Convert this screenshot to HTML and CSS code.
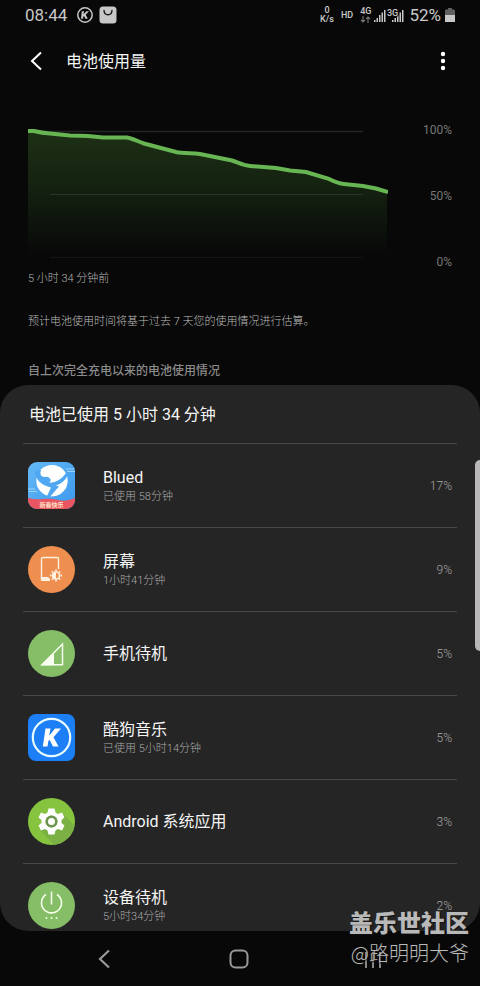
FILE: index.html
```html
<!DOCTYPE html>
<html lang="zh-CN">
<head>
<meta charset="utf-8">
<meta name="viewport" content="width=device-width, initial-scale=1">
<title>电池使用量</title>
<link rel="stylesheet" href="styles.css">
</head>
<body>
<div class="screen">
  <div class="status">
    <div class="status-group">
      <span class="clock">08:44</span>
      <svg width="18" height="18" viewBox="0 0 18 18" aria-hidden="true"><circle cx="9" cy="9" r="7.2" fill="none" stroke="#c8c8c8" stroke-width="1.5"/><path d="M5.8 5.2H8L7.6 8.2L10.4 5.2H13L9.7 8.7L11.8 12.8H9.4L8 10L7.1 11V12.8H5Z" fill="#c8c8c8"/></svg>
      <svg width="18" height="18" viewBox="0 0 18 18" aria-hidden="true"><rect x="0.5" y="0.5" width="17" height="17" rx="3.5" fill="#c8c8c8"/><path d="M5 4.5C5.5 10.2 12.5 10.2 13 4.5" fill="none" stroke="#181818" stroke-width="1.4" stroke-linecap="round"/></svg>
    </div>
    <div class="status-group status-right">
      <span class="speed"><span>0</span><span>K/s</span></span>
      <span class="hd">HD</span>
      <span class="network"><span>4G</span><svg width="11" height="7" viewBox="0 0 11 7" aria-hidden="true"><path d="M3 0V6M1 4L3 6L5 4M8 7V1M6 3L8 1L10 3" fill="none" stroke="#777" stroke-width="1.1"/></svg></span>
      <svg class="signals" width="32" height="15" viewBox="0 0 32 15" aria-hidden="true"><g fill="#c8c8c8"><path d="M1 12H2.5V14H1ZM3.5 10H5V14H3.5ZM6 7H7.5V14H6ZM8.5 4.500H10V14H8.5ZM11 2H12.5V14H11ZM19 12H20.5V14H19ZM21.5 10H23V14H21.5ZM24 7H25.5V14H24ZM26.5 4.500H28V14H26.5ZM29 2H30.5V14H29Z"/></g><text class="signal-label" x="14" y="8">3G</text></svg>
      <span class="level">52%</span>
      <svg width="10" height="14" viewBox="0 0 10 14" aria-hidden="true"><path d="M3 0H7V1.5H9Q10 1.5 10 2.5V8H0V2.5Q0 1.5 1 1.5H3Z" fill="#606060"/><path d="M0 7H10V14H0Z" fill="#c8c8c8"/></svg>
    </div>
  </div>

  <header class="header">
    <button class="icon-button" type="button" aria-label="返回"><svg width="14" height="20" viewBox="0 0 14 20"><path d="M12 1.5L3 10L12 18.5" fill="none" stroke="#fff" stroke-width="2"/></svg></button>
    <h1>电池使用量</h1>
    <button class="icon-button more" type="button" aria-label="更多选项"><svg width="6" height="20" viewBox="0 0 6 20"><g fill="#fff"><circle cx="3" cy="3" r="2.2"/><circle cx="3" cy="10" r="2.2"/><circle cx="3" cy="17" r="2.2"/></g></svg></button>
  </header>

  <section class="summary">
    <div class="chart">
      <svg class="plot" viewBox="0 2 360 138" role="img" aria-label="电池电量">
        <defs><linearGradient id="fill" x1="0" y1="0" x2="0" y2="1"><stop offset="0" stop-color="#1d3014"/><stop offset="0.5" stop-color="#132010"/><stop offset="1" stop-color="#080808"/></linearGradient></defs>
        <path d="M0 11.5H335" stroke="#242424" stroke-width="1.5"/>
        <path d="M0 11L7 11L14 12.5L40 15L58 16L75 17L99 17.5L116 23L148 32L172 34L202 40L222 46L248 48.5L278 52L300 59L312 63L335 66L348 69L359 72V134H0Z" fill="url(#fill)"/>
        <path d="M22 74.5H335" stroke="#3b463b" stroke-opacity="0.55"/>
        <path d="M22 137.5H335" stroke="#151515"/>
        <path d="M0 11L6 11C10 12 14 13 22 13.5L42 15.5L60 16L75 17.5H99C105 18.5 110 21.5 116 23.5L148 32C156 33.5 164 33 172 34L204 40.5C210 42.5 215 45.5 222 46L248 48L262 50.5L278 52L300 58.5C306 61.5 310 63.5 316 64L335 66L348 68.5L360 72" fill="none" stroke="#67b653" stroke-width="4"/>
      </svg>
      <div class="axis"><span>100%</span><span>50%</span><span>0%</span></div>
    </div>
    <p class="start">5 小时 34 分钟前</p>
    <p class="note">预计电池使用时间将基于过去 7 天您的使用情况进行估算。</p>
    <h2 class="section-title">自上次完全充电以来的电池使用情况</h2>
  </section>

  <main class="card">
    <h2 class="card-title">电池已使用 5 小时 34 分钟</h2>
    <ul class="apps">
      <li class="app">
        <svg class="app-icon" viewBox="0 0 47 47" aria-hidden="true">
          <defs><linearGradient id="sky" x1="0" y1="0" x2="1" y2="1"><stop offset="0" stop-color="#64b8f5"/><stop offset="1" stop-color="#3c98ed"/></linearGradient><clipPath id="tile"><rect width="47" height="47" rx="9"/></clipPath></defs>
          <g clip-path="url(#tile)"><rect width="47" height="47" fill="url(#sky)"/>
          <path d="M38 7H46M39 9.5H47M0 27H7M1 29.5H9" stroke="#9bd3fa" stroke-width="1"/>
          <circle cx="24" cy="18.7" r="15.7" fill="#fff"/>
          <path d="M7 9L13 8Q11 14 16 15Q20 14 22.500 17Q23 19 21.500 21Q32 20 38 11L40 13Q36 21 28 23.500L31 24.500L21 36L19 34L23 25.500Q12 23 8 15Z" fill="#4fa8f1"/>
          <path d="M0 36Q8 38 15 37T30 38T47 36V47H0Z" fill="#e95662"/></g>
          <text class="banner-text" x="23.5" y="45" text-anchor="middle">新春快乐</text>
        </svg>
        <div class="app-text"><h3>Blued</h3><p>已使用 58分钟</p></div><span class="percent">17%</span>
      </li>
      <li class="app">
        <svg class="app-icon" viewBox="0 0 47 47" aria-hidden="true"><circle cx="23.5" cy="23.5" r="23.5" fill="#ee8f50"/><path d="M30.5 23V13Q30.5 11.5 29 11.5H15Q13.5 11.5 13.5 13V32.5" fill="none" stroke="#fff1df" stroke-width="1.4"/><path d="M12.8 31H20L22 33V35H14Q12.8 35 12.8 34Z" fill="#fff1df"/><circle cx="28" cy="29.5" r="3.5" fill="none" stroke="#fff1df" stroke-width="1.5"/><path d="M28 26A3.5 3.5 0 0 0 28 33Z" fill="#fff1df"/><path d="M28 23.5V25M28 34V35.5M22 29.5H23.5M32.5 29.5H34M23.8 25.3L24.9 26.4M31.1 32.6L32.2 33.7M23.8 33.7L24.9 32.6M31.1 26.4L32.2 25.3" stroke="#fff1df" stroke-width="1.8"/></svg>
        <div class="app-text"><h3>屏幕</h3><p>1小时41分钟</p></div><span class="percent">9%</span>
      </li>
      <li class="app">
        <svg class="app-icon" viewBox="0 0 47 47" aria-hidden="true"><circle cx="23.5" cy="23.5" r="23.5" fill="#86bd67"/><path d="M14 34.8L34.5 14V34.8Z" fill="none" stroke="#f7ffee" stroke-width="1.5"/><path d="M13 35.3L26 22.5V35.3Z" fill="#f7ffee"/></svg>
        <div class="app-text"><h3>手机待机</h3></div><span class="percent">5%</span>
      </li>
      <li class="app">
        <svg class="app-icon" viewBox="0 0 47 47" aria-hidden="true"><rect width="47" height="47" rx="8" fill="#1c7ff5"/><circle cx="23.5" cy="23.5" r="18.7" fill="none" stroke="#e8fbff" stroke-width="2.2"/><path d="M17.5 14.5H22.5L21.2 21.8L27 14.5H33L25.5 23.2L30.5 32.5H25L21.5 25.8L20.3 27.2L19.5 32.5H14.8Z" fill="#fff"/></svg>
        <div class="app-text"><h3>酷狗音乐</h3><p>已使用 5小时14分钟</p></div><span class="percent">5%</span>
      </li>
      <li class="app">
        <svg class="app-icon" viewBox="0 0 47 47" aria-hidden="true"><defs><clipPath id="disc"><circle cx="23.5" cy="23.5" r="23.5"/></clipPath></defs><g clip-path="url(#disc)"><rect width="47" height="47" fill="#86c440"/><path d="M12 32L27 48H47V28L35 16Z" fill="#7bb045"/></g><path fill-rule="evenodd" d="M20.5 10.5H26.5L27.5 14.5L30 16L34 14.5L36.5 19.5L33.5 22V25L36.5 27.5L34 32.5L30 31L27.5 32.5L26.5 36.5H20.5L19.5 32.5L17 31L13 32.5L10.5 27.5L13.5 25V22L10.5 19.5L13 14.5L17 16L19.5 14.5ZM29.5 23.5A6 6 0 1 0 17.5 23.5A6 6 0 1 0 29.5 23.5Z" fill="#fff"/><circle cx="23.5" cy="23.5" r="6" fill="#6d9550"/><circle cx="23.5" cy="23.5" r="3.5" fill="#fff"/></svg>
        <div class="app-text"><h3>Android 系统应用</h3></div><span class="percent">3%</span>
      </li>
      <li class="app">
        <svg class="app-icon" viewBox="0 0 47 47" aria-hidden="true"><circle cx="23.5" cy="23.5" r="23.5" fill="#86bd67"/><path d="M18 12.5A10 10 0 1 0 29 12.5M23.5 9.5V22.5" fill="none" stroke="#f4ffe9" stroke-width="1.6"/><g fill="#f4ffe9"><circle cx="18.5" cy="36" r="1"/><circle cx="23.5" cy="36" r="1"/><circle cx="28.5" cy="36" r="1"/></g></svg>
        <div class="app-text"><h3>设备待机</h3><p>5小时34分钟</p></div><span class="percent">2%</span>
      </li>
    </ul>
  </main>

  <nav class="nav" aria-label="系统导航">
    <button class="nav-button" type="button" aria-label="返回"><svg width="22" height="22" viewBox="0 0 22 22"><path d="M16 2.5L7 11L16 19.5" fill="none" stroke="#999" stroke-width="2.2"/></svg></button>
    <button class="nav-button" type="button" aria-label="主屏幕"><svg width="22" height="22" viewBox="0 0 22 22"><rect x="2.5" y="2.5" width="17" height="17" rx="5" fill="none" stroke="#999" stroke-width="2"/></svg></button>
    <button class="nav-button" type="button" aria-label="最近使用"><svg width="22" height="22" viewBox="0 0 22 22"><path d="M4 4V20M11 4V20M18 4V20" stroke="#888" stroke-width="2"/></svg></button>
  </nav>

  <div class="edge-handle"></div>
  <div class="credit"><strong>盖乐世社区</strong><span>@路明明大爷</span></div>
</div>
</body>
</html>
```
FILE: styles.css
```css
* { box-sizing: border-box; }

body {
  margin: 0;
  background: #080808;
  color: #f5f5f5;
  font-family: Roboto, "Noto Sans CJK SC", sans-serif;
}

h1, h2, h3, p, ul { margin: 0; padding: 0; font-weight: 400; }
svg { display: block; flex: none; }

button {
  display: flex;
  align-items: center;
  justify-content: center;
  padding: 0;
  border: 0;
  background: none;
}

.screen {
  position: relative;
  display: flex;
  flex-direction: column;
  height: 100vh;
  overflow: hidden;
}

.status {
  display: flex;
  align-items: center;
  justify-content: space-between;
  height: 30px;
  padding: 0 25px;
  color: #c8c8c8;
}

.status-group { display: flex; align-items: center; gap: 5px; }
.clock, .level { font-size: 17px; line-height: 30px; }
.clock { margin-right: 4px; }

.speed, .network {
  display: flex;
  flex-direction: column;
  align-items: center;
  font-size: 9px;
  line-height: 9px;
  font-weight: 500;
}

.speed { margin-right: 3px; }
.hd { margin-right: 3px; font-size: 9px; font-weight: 500; }
.signals { margin-left: -2px; }
.signal-label { fill: #c8c8c8; stroke: #080808; stroke-width: 2px; paint-order: stroke; font-size: 9px; font-weight: 500; }
.status-right { gap: 4px; }

.header {
  display: flex;
  align-items: center;
  height: 62px;
  padding: 0 32px 0 20px;
}

.icon-button { width: 32px; height: 40px; }
.header h1 { flex: 1; margin-left: 14px; font-size: 16px; line-height: 24px; padding-top: 2px; }
.more { width: 12px; margin-right: -1px; }

.summary { padding: 30px 28px 0; }
.chart { display: flex; align-items: flex-start; justify-content: space-between; }
.plot { flex: 0 1 360px; min-width: 0; height: auto; }

.axis {
  display: flex;
  flex-direction: column;
  justify-content: space-between;
  height: 148px;
  color: #777;
  font-size: 12px;
  line-height: 16px;
  text-align: right;
}

.start, .note { font-size: 11px; line-height: 16px; font-weight: 300; }
.start { padding-top: 1px; color: #b4b4b4; }
.note { margin-top: 27px; color: #bcbcbc; }
.section-title { margin-top: 32px; color: #8a8a8a; font-size: 12px; line-height: 18px; font-weight: 500; }

.card {
  flex: 1;
  min-height: 0;
  margin-top: 5px;
  padding: 0 23px;
  overflow: hidden;
  border-radius: 28px;
  background: #252525;
}

.card-title { padding: 18px 6px 16px; font-size: 16px; line-height: 24px; }
.apps { list-style: none; }

.app {
  display: flex;
  align-items: center;
  height: 84px;
  padding: 0 5px;
  border-top: 1px solid #484848;
}

.app-icon { width: 47px; height: 47px; }
.banner-text { fill: #ffe1c5; font-size: 6px; font-weight: 700; }
.app-text { flex: 1; margin-left: 28px; }
.app-text h3 { font-size: 16px; line-height: 22px; }
.app-text p { color: #a8a8a8; font-size: 11px; line-height: 16px; font-weight: 300; }
.percent { color: #a8a8a8; font-size: 12px; line-height: 16px; font-weight: 300; }

.nav {
  display: flex;
  flex: none;
  align-items: center;
  justify-content: space-between;
  height: 55px;
  padding: 0 96px 0 93px;
}

.nav-button { width: 22px; height: 22px; }

.edge-handle {
  position: absolute;
  top: 460px;
  right: 0;
  width: 5px;
  height: 191px;
  border-radius: 5px 0 0 5px;
  background: #b9b7b8;
}

.credit {
  position: absolute;
  right: 11px;
  bottom: 18px;
  display: flex;
  flex-direction: column;
  align-items: flex-end;
  color: #b9b9b9;
  font-family: "Noto Sans CJK SC", sans-serif;
  text-shadow: 1px 1px 1px #111;
}

.credit strong { font-size: 24px; line-height: 32px; font-weight: 900; }
.credit span { font-size: 20px; line-height: 30px; font-weight: 300; }
```
